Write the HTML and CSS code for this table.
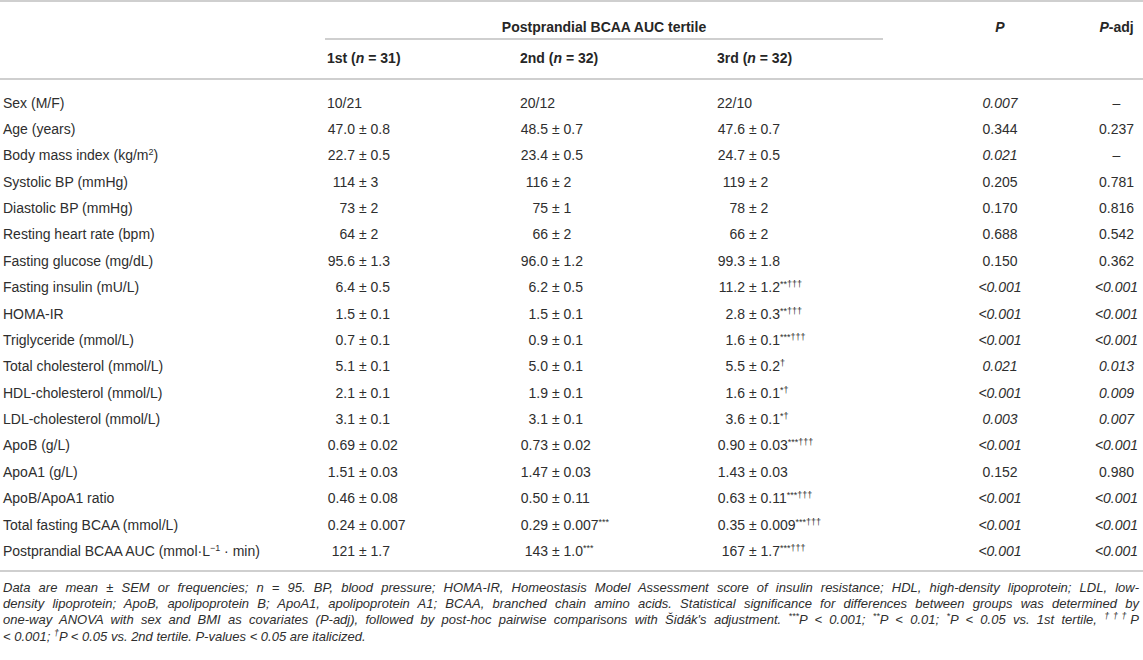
FILE: index.html
```html
<!DOCTYPE html>
<html lang="en">
<head>
<meta charset="utf-8">
<title>Postprandial BCAA AUC tertile</title>
<link rel="stylesheet" href="styles.css">
</head>
<body>
<table class="tbl">
  <colgroup>
    <col class="c-lab"><col class="c-1"><col class="c-2"><col class="c-3"><col class="c-p"><col class="c-pa">
  </colgroup>
  <thead>
    <tr class="h1">
      <th></th>
      <th colspan="3" class="span"><div class="span-in">Postprandial BCAA AUC tertile</div></th>
      <th class="pc"><i>P</i></th>
      <th class="pc"><i>P</i>-adj</th>
    </tr>
    <tr class="h2">
      <th></th>
      <th class="gh">1st (<i>n</i> = 31)</th>
      <th class="gh">2nd (<i>n</i> = 32)</th>
      <th class="gh">3rd (<i>n</i> = 32)</th>
      <th></th>
      <th></th>
    </tr>
  </thead>
  <tbody>
    <tr class="first">
      <td class="lab">Sex (M/F)</td>
      <td class="v">10/21</td><td class="v">20/12</td><td class="v">22/10</td>
      <td class="p"><i>0.007</i></td><td class="p">–</td>
    </tr>
    <tr>
      <td class="lab">Age (years)</td>
      <td class="v"><span class="a">47.0</span> ± 0.8</td><td class="v"><span class="a">48.5</span> ± 0.7</td><td class="v"><span class="a">47.6</span> ± 0.7</td>
      <td class="p">0.344</td><td class="p">0.237</td>
    </tr>
    <tr>
      <td class="lab">Body mass index (kg/m<sup>2</sup>)</td>
      <td class="v"><span class="a">22.7</span> ± 0.5</td><td class="v"><span class="a">23.4</span> ± 0.5</td><td class="v"><span class="a">24.7</span> ± 0.5</td>
      <td class="p"><i>0.021</i></td><td class="p">–</td>
    </tr>
    <tr>
      <td class="lab">Systolic BP (mmHg)</td>
      <td class="v"><span class="a">114</span> ± 3</td><td class="v"><span class="a">116</span> ± 2</td><td class="v"><span class="a">119</span> ± 2</td>
      <td class="p">0.205</td><td class="p">0.781</td>
    </tr>
    <tr>
      <td class="lab">Diastolic BP (mmHg)</td>
      <td class="v"><span class="a">73</span> ± 2</td><td class="v"><span class="a">75</span> ± 1</td><td class="v"><span class="a">78</span> ± 2</td>
      <td class="p">0.170</td><td class="p">0.816</td>
    </tr>
    <tr>
      <td class="lab">Resting heart rate (bpm)</td>
      <td class="v"><span class="a">64</span> ± 2</td><td class="v"><span class="a">66</span> ± 2</td><td class="v"><span class="a">66</span> ± 2</td>
      <td class="p">0.688</td><td class="p">0.542</td>
    </tr>
    <tr>
      <td class="lab">Fasting glucose (mg/dL)</td>
      <td class="v"><span class="a">95.6</span> ± 1.3</td><td class="v"><span class="a">96.0</span> ± 1.2</td><td class="v"><span class="a">99.3</span> ± 1.8</td>
      <td class="p">0.150</td><td class="p">0.362</td>
    </tr>
    <tr>
      <td class="lab">Fasting insulin (mU/L)</td>
      <td class="v"><span class="a">6.4</span> ± 0.5</td><td class="v"><span class="a">6.2</span> ± 0.5</td><td class="v"><span class="a">11.2</span> ± 1.2<sup>**†††</sup></td>
      <td class="p"><i>&lt;0.001</i></td><td class="p"><i>&lt;0.001</i></td>
    </tr>
    <tr>
      <td class="lab">HOMA-IR</td>
      <td class="v"><span class="a">1.5</span> ± 0.1</td><td class="v"><span class="a">1.5</span> ± 0.1</td><td class="v"><span class="a">2.8</span> ± 0.3<sup>**†††</sup></td>
      <td class="p"><i>&lt;0.001</i></td><td class="p"><i>&lt;0.001</i></td>
    </tr>
    <tr>
      <td class="lab">Triglyceride (mmol/L)</td>
      <td class="v"><span class="a">0.7</span> ± 0.1</td><td class="v"><span class="a">0.9</span> ± 0.1</td><td class="v"><span class="a">1.6</span> ± 0.1<sup>***†††</sup></td>
      <td class="p"><i>&lt;0.001</i></td><td class="p"><i>&lt;0.001</i></td>
    </tr>
    <tr>
      <td class="lab">Total cholesterol (mmol/L)</td>
      <td class="v"><span class="a">5.1</span> ± 0.1</td><td class="v"><span class="a">5.0</span> ± 0.1</td><td class="v"><span class="a">5.5</span> ± 0.2<sup>†</sup></td>
      <td class="p"><i>0.021</i></td><td class="p"><i>0.013</i></td>
    </tr>
    <tr>
      <td class="lab">HDL-cholesterol (mmol/L)</td>
      <td class="v"><span class="a">2.1</span> ± 0.1</td><td class="v"><span class="a">1.9</span> ± 0.1</td><td class="v"><span class="a">1.6</span> ± 0.1<sup>*†</sup></td>
      <td class="p"><i>&lt;0.001</i></td><td class="p"><i>0.009</i></td>
    </tr>
    <tr>
      <td class="lab">LDL-cholesterol (mmol/L)</td>
      <td class="v"><span class="a">3.1</span> ± 0.1</td><td class="v"><span class="a">3.1</span> ± 0.1</td><td class="v"><span class="a">3.6</span> ± 0.1<sup>*†</sup></td>
      <td class="p"><i>0.003</i></td><td class="p"><i>0.007</i></td>
    </tr>
    <tr>
      <td class="lab">ApoB (g/L)</td>
      <td class="v"><span class="a">0.69</span> ± 0.02</td><td class="v"><span class="a">0.73</span> ± 0.02</td><td class="v"><span class="a">0.90</span> ± 0.03<sup>***†††</sup></td>
      <td class="p"><i>&lt;0.001</i></td><td class="p"><i>&lt;0.001</i></td>
    </tr>
    <tr>
      <td class="lab">ApoA1 (g/L)</td>
      <td class="v"><span class="a">1.51</span> ± 0.03</td><td class="v"><span class="a">1.47</span> ± 0.03</td><td class="v"><span class="a">1.43</span> ± 0.03</td>
      <td class="p">0.152</td><td class="p">0.980</td>
    </tr>
    <tr>
      <td class="lab">ApoB/ApoA1 ratio</td>
      <td class="v"><span class="a">0.46</span> ± 0.08</td><td class="v"><span class="a">0.50</span> ± 0.11</td><td class="v"><span class="a">0.63</span> ± 0.11<sup>***†††</sup></td>
      <td class="p"><i>&lt;0.001</i></td><td class="p"><i>&lt;0.001</i></td>
    </tr>
    <tr>
      <td class="lab">Total fasting BCAA (mmol/L)</td>
      <td class="v"><span class="a">0.24</span> ± 0.007</td><td class="v"><span class="a">0.29</span> ± 0.007<sup>***</sup></td><td class="v"><span class="a">0.35</span> ± 0.009<sup>***†††</sup></td>
      <td class="p"><i>&lt;0.001</i></td><td class="p"><i>&lt;0.001</i></td>
    </tr>
    <tr class="last">
      <td class="lab">Postprandial BCAA AUC (mmol·L<sup>−1</sup> · min)</td>
      <td class="v"><span class="a">121</span> ± 1.7</td><td class="v"><span class="a">143</span> ± 1.0<sup>***</sup></td><td class="v"><span class="a">167</span> ± 1.7<sup>***†††</sup></td>
      <td class="p"><i>&lt;0.001</i></td><td class="p"><i>&lt;0.001</i></td>
    </tr>
  </tbody>
</table>
<p class="note">
  <span class="ln">Data are mean ± SEM or frequencies; n = 95. BP, blood pressure; HOMA-IR, Homeostasis Model Assessment score of insulin resistance; HDL, high-density lipoprotein; LDL, low-</span>
  <span class="ln">density lipoprotein; ApoB, apolipoprotein B; ApoA1, apolipoprotein A1; BCAA, branched chain amino acids. Statistical significance for differences between groups was determined by</span>
  <span class="ln">one-way ANOVA with sex and BMI as covariates (P-adj), followed by post-hoc pairwise comparisons with Šidák's adjustment. <sup>***</sup>P &lt; 0.001; <sup>**</sup>P &lt; 0.01; <sup>*</sup>P &lt; 0.05 vs. 1st tertile, <sup>†††</sup>P</span>
  <span class="ln end">&lt; 0.001; <sup>†</sup>P &lt; 0.05 vs. 2nd tertile. P-values &lt; 0.05 are italicized.</span>
</p>
</body>
</html>
```

FILE: styles.css
```css
html, body {
  margin: 0;
  padding: 0;
  background: #ffffff;
}

body {
  color: #2e2e2e;
  font-family: "Liberation Sans", Arial, sans-serif;
  font-size: 14px;
}

.tbl {
  width: 1143px;
  table-layout: fixed;
  border-collapse: separate;
  border-spacing: 0;
}

.c-lab { width: 324px; }
.c-1 { width: 193px; }
.c-2 { width: 197px; }
.c-3 { width: 196px; }
.c-p { width: 180px; }
.c-pa { width: 53px; }

.tbl th {
  font-weight: bold;
  text-align: left;
  line-height: 17px;
  color: #262626;
  padding: 0;
}

.h1 th {
  border-top: 2px solid #cfcfcf;
  padding-top: 17px;
  vertical-align: top;
}

.span-in {
  margin: 0 27px 0 1px;
  padding-bottom: 2px;
  border-bottom: 2px solid #cfcfcf;
  text-align: center;
}

.h1 th.pc {
  text-align: center;
}

.h2 th {
  padding-top: 10px;
  padding-bottom: 11px;
  border-bottom: 2px solid #cfcfcf;
}

.h2 th.gh {
  padding-left: 3px;
}

.tbl td {
  padding: 4.7px 0 4.7px 3px;
  line-height: 17px;
  white-space: nowrap;
  vertical-align: top;
}

.first td {
  padding-top: 14.5px;
}

.last td {
  padding-bottom: 10px;
  border-bottom: 2px solid #cfcfcf;
}

.tbl td.p {
  padding-left: 0;
  text-align: center;
}

.a {
  display: inline-block;
  width: 28px;
  text-align: right;
}

sup {
  font-size: 9px;
  line-height: 0;
  vertical-align: 5px;
}

.note {
  margin: 8px 0 0;
  padding: 0 4px 0 3px;
  font-style: italic;
  font-size: 13px;
  line-height: 16.3px;
  color: #2e2e2e;
}

.ln {
  display: block;
  text-align: justify;
  text-align-last: justify;
}

.ln.end {
  text-align: left;
  text-align-last: left;
}
```
